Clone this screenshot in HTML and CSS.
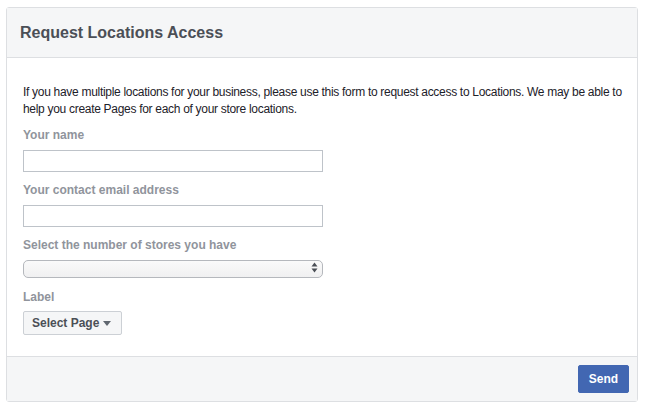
FILE: index.html
```html
<!DOCTYPE html>
<html lang="en">
<head>
    <meta charset="UTF-8">
    <title>Request Locations Access</title>
    <link rel="stylesheet" href="styles.css">
</head>
<body>
    <div class="panel">
        <div class="panel-header">
            <h1>Request Locations Access</h1>
        </div>
        <div class="panel-body">
            <p class="intro">If you have multiple locations for your business, please use this form to request access to Locations. We may be able to help you create Pages for each of your store locations.</p>

            <label class="field-label">Your name</label>
            <input class="text-input" type="text">

            <label class="field-label">Your contact email address</label>
            <input class="text-input" type="text">

            <label class="field-label tight">Select the number of stores you have</label>
            <div class="select-wrap">
                <select class="store-select"></select>
                <svg class="select-arrows" width="7" height="11" viewBox="0 0 7 11">
                    <path d="M3.5 0.5 L6.5 4.5 L0.5 4.5 Z" fill="#4b4f56"/>
                    <path d="M3.5 10.5 L6.5 6.5 L0.5 6.5 Z" fill="#4b4f56"/>
                </svg>
            </div>

            <label class="field-label tight">Label</label>
            <button class="page-button">Select Page <span class="caret"></span></button>
        </div>
        <div class="panel-footer">
            <button class="send-button">Send</button>
        </div>
    </div>
</body>
</html>
```

FILE: styles.css
```css
* {
    margin: 0;
    padding: 0;
    box-sizing: border-box;
}

body {
    font-family: 'Liberation Sans', Arial, sans-serif;
    background-color: #ffffff;
    padding: 7px 9px 0 6px;
}

.panel {
    width: 632px;
    border: 1px solid #dddfe2;
    border-radius: 3px;
    background-color: #ffffff;
}

/* Header */
.panel-header {
    height: 50px;
    background-color: #f5f6f7;
    border-bottom: 1px solid #dddfe2;
    padding: 0 13px;
    display: flex;
    align-items: center;
}

.panel-header h1 {
    font-size: 16px;
    font-weight: bold;
    color: #4b4f56;
}

/* Body */
.panel-body {
    padding: 26px 16px 21px 16px;
    display: flex;
    flex-direction: column;
    align-items: flex-start;
}

.intro {
    font-size: 12px;
    line-height: 17px;
    letter-spacing: -0.3px;
    margin-right: -6px;
    color: #1d2129;
    margin-bottom: 9px;
}

.field-label {
    font-size: 12px;
    line-height: 17px;
    font-weight: bold;
    color: #90949c;
    margin-bottom: 6px;
}

.field-label.tight {
    margin-bottom: 5px;
}

.text-input {
    width: 300px;
    height: 22px;
    border: 1px solid #bec3c9;
    border-radius: 0;
    background: #ffffff;
    margin-bottom: 10px;
}

.select-wrap {
    position: relative;
    width: 300px;
    height: 18px;
    margin-bottom: 12px;
}

.store-select {
    -webkit-appearance: none;
    appearance: none;
    width: 100%;
    height: 18px;
    border: 1px solid #b5b8bd;
    border-radius: 5px;
    background: linear-gradient(#fafafa, #f0f0f1);
}

.select-arrows {
    position: absolute;
    right: 5px;
    top: 3px;
}

.page-button {
    height: 24px;
    padding: 0 8px;
    width: 99px;
    font-family: inherit;
    font-size: 12px;
    font-weight: bold;
    color: #4b4f56;
    background-color: #f5f6f7;
    border: 1px solid #ccd0d5;
    border-radius: 2px;
    display: flex;
    align-items: center;
    gap: 4px;
}

.caret {
    width: 0;
    height: 0;
    border-left: 4px solid transparent;
    border-right: 4px solid transparent;
    border-top: 5px solid #606770;
    margin-top: 1px;
}

/* Footer */
.panel-footer {
    height: 45px;
    background-color: #f5f6f7;
    border-top: 1px solid #dddfe2;
    padding: 0 8px 0 0;
    display: flex;
    align-items: center;
    justify-content: flex-end;
}

.send-button {
    height: 28px;
    width: 51px;
    font-family: inherit;
    font-size: 12px;
    font-weight: bold;
    color: #ffffff;
    background-color: #4267b2;
    border: 1px solid #4267b2;
    border-radius: 2px;
}
```
